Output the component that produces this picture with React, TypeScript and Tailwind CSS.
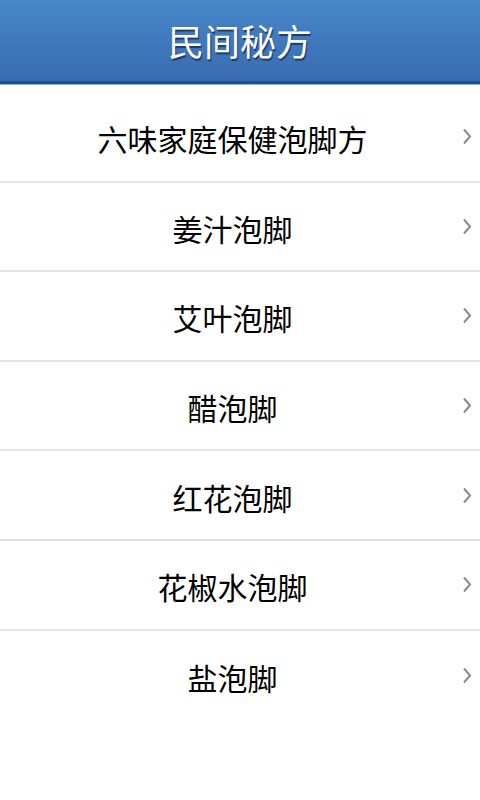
const items = ['六味家庭保健泡脚方', '姜汁泡脚', '艾叶泡脚', '醋泡脚', '红花泡脚', '花椒水泡脚', '盐泡脚']

function Chevron() {
  return (
    <svg width="10" height="17" viewBox="0 0 10 17" className="shrink-0">
      <polyline points="2,1.5 8,8.5 2,15.5" fill="none" stroke="#8a8a8a" strokeWidth="2" />
    </svg>
  )
}

export default function App() {
  return (
    <div
      className="w-[480px] h-[800px] bg-white overflow-hidden"
      style={{ fontFamily: '"Noto Sans CJK SC", "Noto Sans", sans-serif' }}
    >
      {/* title bar */}
      <div className="h-[81px] bg-gradient-to-b from-[#4887cb] to-[#396bb0] flex items-center justify-center">
        <h1 className="text-[36px] leading-none text-white pb-[1px] [text-shadow:1px_2px_1px_#1c3a66]">民间秘方</h1>
      </div>
      <div className="h-[3px] bg-[#1d4e93]" />
      <div className="h-[1px] bg-[#8fb0dc]" />

      <ul className="mt-[8px]">
        {items.map((name, i) => (
          <li
            key={name}
            className={
              'h-[89.6px] flex items-center pl-[3px] pr-[8px] ' +
              (i < items.length - 1 ? 'border-b-2 border-[#e3e3e3]' : '')
            }
          >
            <span className="flex-1 text-center text-[30px] leading-none text-black pt-[3px]">{name}</span>
            <Chevron />
          </li>
        ))}
      </ul>
    </div>
  )
}
